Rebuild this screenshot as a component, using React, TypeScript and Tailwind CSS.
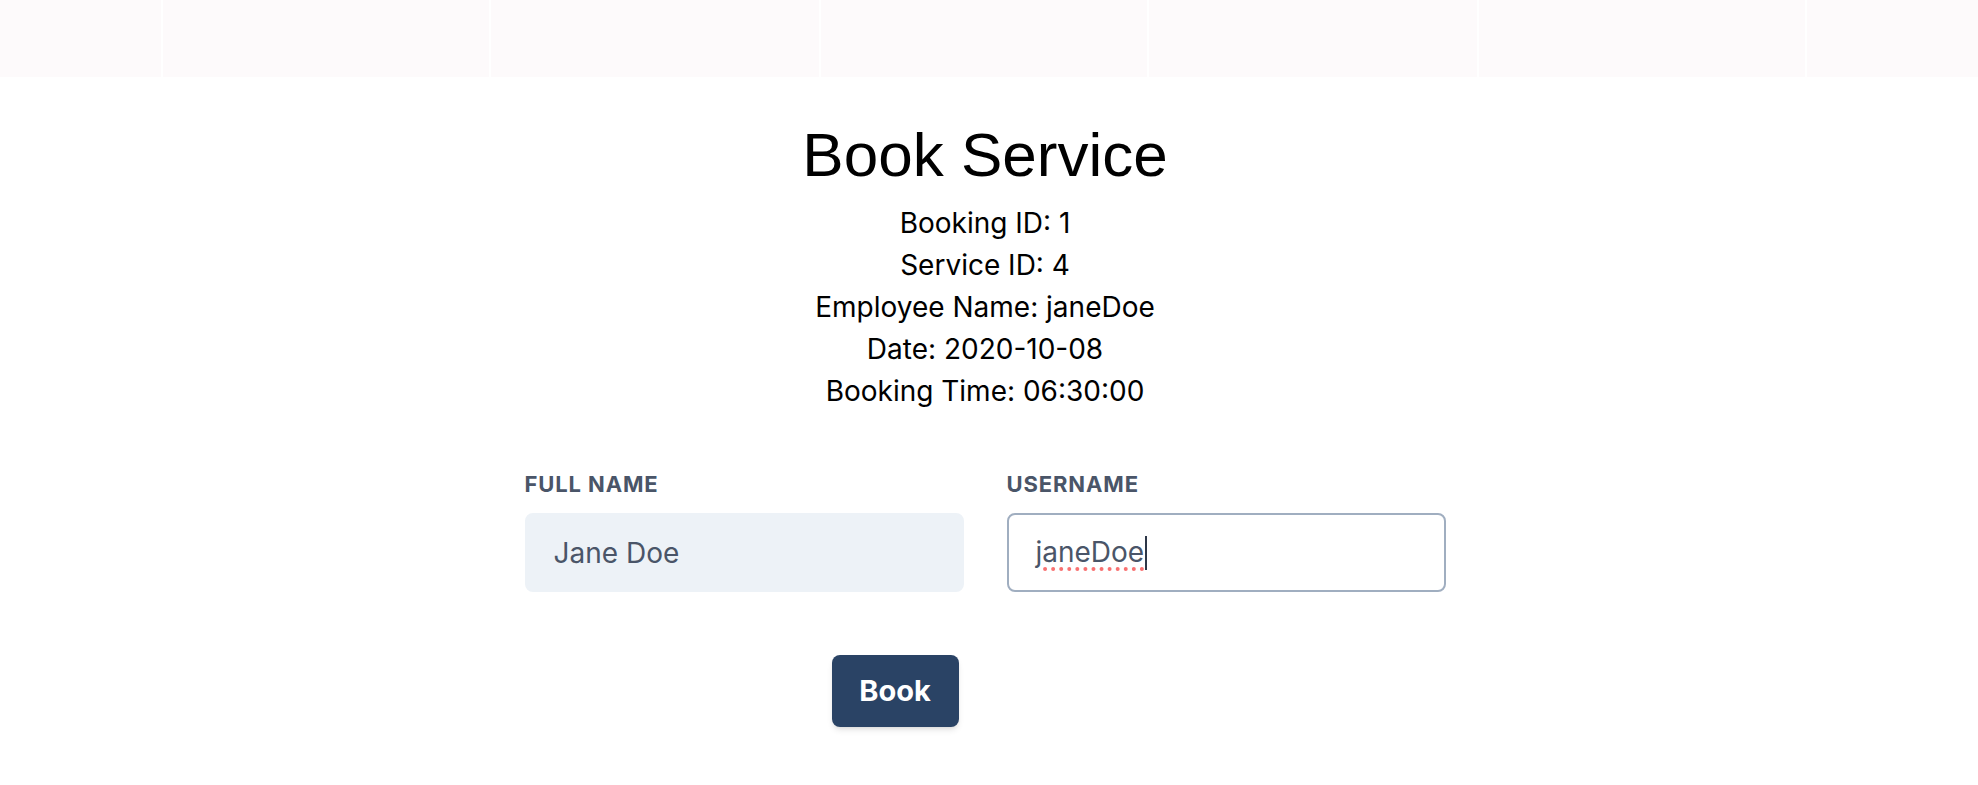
import React, { useState } from "react";

const booking = {
  bookingId: 1,
  serviceId: 4,
  employee: "janeDoe",
  date: "2020-10-08",
  time: "06:30:00",
};

function NavBar() {
  return (
    <nav className="flex h-[77px] gap-[2px] bg-white">
      <div className="w-[161px] bg-[#fdfafb]" />
      <div className="w-[326px] bg-[#fdfafb]" />
      <div className="w-[328px] bg-[#fdfafb]" />
      <div className="w-[326px] bg-[#fdfafb]" />
      <div className="w-[328px] bg-[#fdfafb]" />
      <div className="w-[326px] bg-[#fdfafb]" />
      <div className="flex-1 bg-[#fdfafb]" />
    </nav>
  );
}

export default function App() {
  const [fullName, setFullName] = useState("Jane Doe");
  const username = "janeDoe";

  return (
    <div className="min-h-screen bg-white font-['Inter',sans-serif]">
      <NavBar />

      <main className="pr-[8px]">
        <h1 className="mt-[42px] text-center font-['Liberation_Sans',Arial,sans-serif] text-[62px] leading-[72px] text-black">
          Book Service
        </h1>

        <div className="mt-[11px] text-center text-[28px] leading-[42px] text-black">
          <p>Booking ID: {booking.bookingId}</p>
          <p>Service ID: {booking.serviceId}</p>
          <p>Employee Name: {booking.employee}</p>
          <p>Date: {booking.date}</p>
          <p>Booking Time: {booking.time}</p>
        </div>

        <form
          className="mx-auto mt-[60px] w-[921px]"
          onSubmit={(e) => e.preventDefault()}
        >
          <div className="grid grid-cols-2 gap-x-[43px]">
            <div>
              <label className="mb-[17px] block text-[22px] font-bold uppercase leading-[24px] tracking-[0.04em] text-[#4a5568]">
                Full Name
              </label>
              <input
                value={fullName}
                onChange={(e) => setFullName(e.target.value)}
                className="block h-[79px] w-full appearance-none rounded-[8px] border-2 border-[#edf2f7] bg-[#edf2f7] px-[27px] text-[28px] leading-tight text-[#4a5568] outline-none"
              />
            </div>
            <div>
              <label className="mb-[17px] block text-[22px] font-bold uppercase leading-[24px] tracking-[0.04em] text-[#4a5568]">
                Username
              </label>
              {/* focused field, drawn with caret + spellcheck marks */}
              <div
                role="textbox"
                className="flex h-[79px] w-full items-center rounded-[8px] border-2 border-[#a0aec0] bg-white px-[27px] text-[28px] leading-tight text-[#4a5568]"
              >
                <span className="underline decoration-[#f87171] decoration-dotted decoration-[4px] underline-offset-[5px]">
                  {username}
                </span>
                <span className="ml-[1px] inline-block h-[34px] w-[2px] bg-[#2d3748]" />
              </div>
            </div>
          </div>

          <div className="mt-[63px] grid grid-cols-3">
            <div className="col-start-2">
              <button
                type="submit"
                className="h-[72px] w-[127px] rounded-[8px] bg-[#2a4365] text-[29px] font-bold text-white shadow-md"
              >
                Book
              </button>
            </div>
          </div>
        </form>
      </main>
    </div>
  );
}
